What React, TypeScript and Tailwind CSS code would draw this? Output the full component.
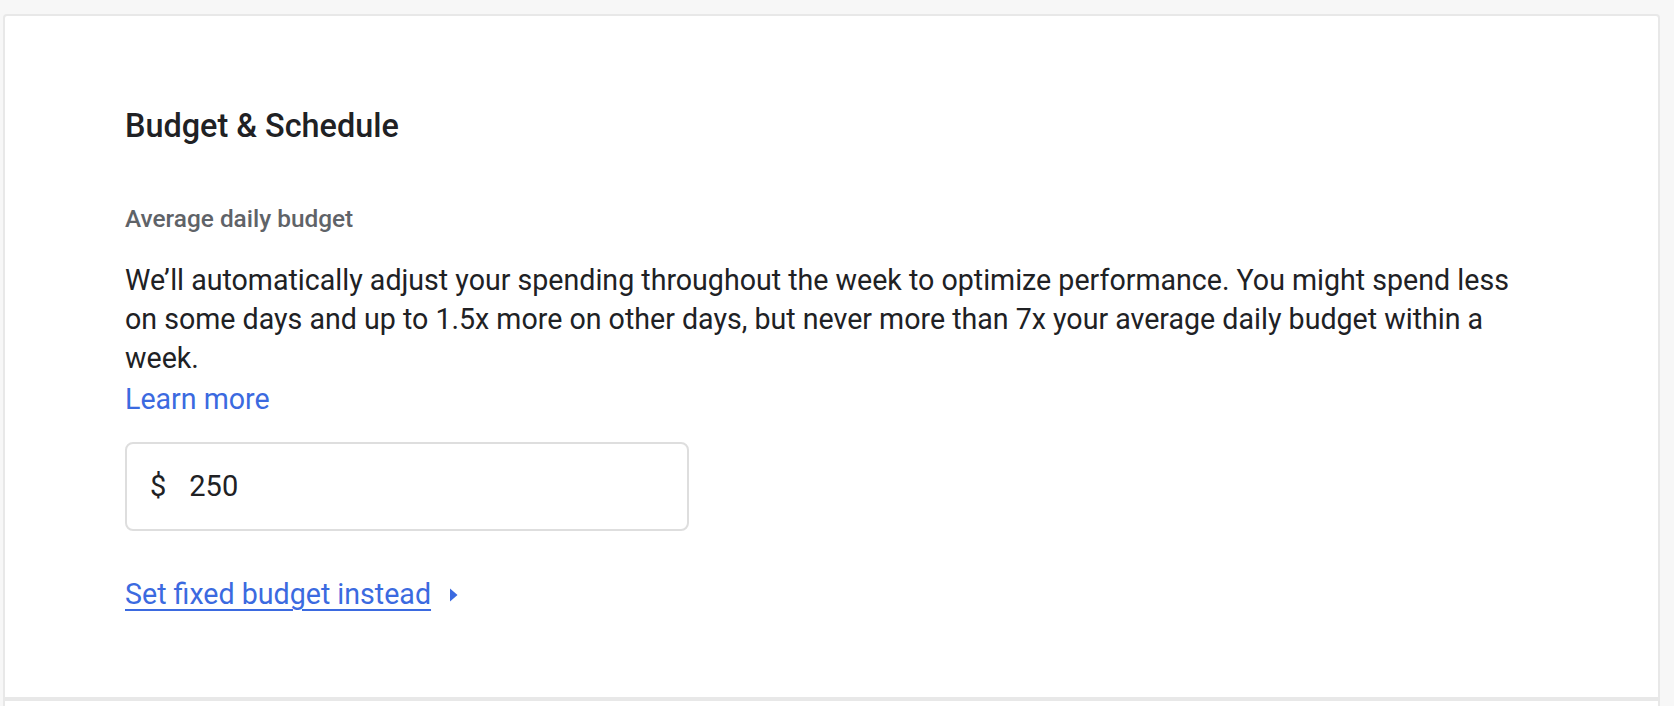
import React from 'react';

// Seção de orçamento e agenda da campanha
const BudgetSchedule: React.FC = () => {
  return (
    <div className="bg-white border-2 border-[#e8e8e8] rounded-t-[4px] h-[685px] pt-[90px] pl-[120px]">
      <h2 className="text-[32.4px] leading-[40px] font-medium text-[#202124]">Budget &amp; Schedule</h2>

      <div className="mt-[58px] text-[24.4px] leading-[30px] font-medium text-[#5f6368]">Average daily budget</div>

      <p className="mt-[27px] max-w-[1405px] text-[28.6px] leading-[39px] text-[#202124]">
        We’ll automatically adjust your spending throughout the week to optimize performance. You might spend less on
        some days and up to 1.5x more on other days, but never more than 7x your average daily budget within a week.
      </p>
      <a href="#" className="block mt-[2px] w-fit text-[28.6px] leading-[39px] text-[#3b6ae0]">
        Learn more
      </a>

      {/* Campo do valor */}
      <div className="mt-[23px] w-[564px] h-[89px] border-2 border-[#dedede] rounded-[8px] flex items-center pl-[23px] text-[29px] text-[#202124]">
        <span>$</span>
        <span className="ml-[23px]">250</span>
      </div>

      <div className="mt-[44px] flex items-center gap-[18px]">
        <a href="#" className="text-[28.6px] leading-[39px] text-[#3b6ae0] underline underline-offset-[5px] decoration-[2px]">
          Set fixed budget instead
        </a>
        <svg width="9" height="14" viewBox="0 0 9 14">
          <path d="M1 0.5 L8.5 7 L1 13.5 Z" fill="#3b6ae0" />
        </svg>
      </div>
    </div>
  );
};

export default function App() {
  return (
    <div className="min-h-[706px] bg-[#f7f7f7] pt-[14px] pl-[3px] pr-[14px] overflow-hidden" style={{ fontFamily: 'Roboto, "Noto Sans", sans-serif' }}>
      <BudgetSchedule />
      <div className="bg-white border-2 border-[#e8e8e8] h-[40px]" />
    </div>
  );
}
